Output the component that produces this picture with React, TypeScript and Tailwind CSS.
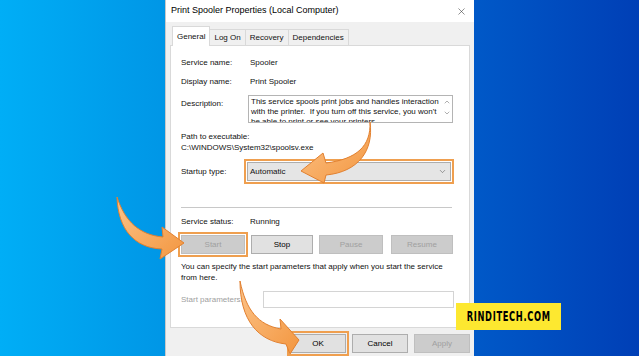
import { X, ChevronDown, ChevronUp } from 'lucide-react';

function Btn({
  label,
  width,
  disabled,
}: {
  label: string;
  width: string;
  disabled?: boolean;
}) {
  return (
    <div
      className={
        width +
        ' h-[19px] flex items-center justify-center border ' +
        (disabled
          ? 'bg-[#cccccc] border-[#bfbfbf] text-[#a0a0a0]'
          : 'bg-[#e1e1e1] border-[#adadad] text-black')
      }
    >
      {label}
    </div>
  );
}

function Highlight({ children }: { children: React.ReactNode }) {
  return <div className="border-2 border-[#ef9f4f] p-px">{children}</div>;
}

function Tab({ label, active }: { label: string; active?: boolean }) {
  if (active) {
    return (
      <div className="h-[20px] -mb-px px-[4px] flex items-center bg-white border border-b-0 border-[#d9d9d9] relative z-10">
        {label}
      </div>
    );
  }
  return (
    <div className="h-[16px] px-[4px] flex items-center bg-[#f0f0f0] border border-b-0 border-l-0 border-[#d9d9d9]">
      {label}
    </div>
  );
}

function Arrows() {
  return (
    <svg
      className="absolute inset-0 pointer-events-none"
      width="639"
      height="356"
      viewBox="0 0 639 356"
    >
      <defs>
        <linearGradient id="orange" x1="0" y1="0" x2="1" y2="1">
          <stop offset="0" stopColor="#fcc48a" />
          <stop offset="1" stopColor="#f3963f" />
        </linearGradient>
      </defs>
      <g fill="url(#orange)" stroke="#e2802f" strokeWidth="1" strokeLinejoin="round">
        <path d="M370,122 C371,146 357,159 326,163 L323,153 L301,171 L324,183 L326,175 C358,172 374,151 370,122 Z" />
        <path d="M117,197 C125,222 140,235 163,237 L162,227 L184,243 L160,259 L162,249 C135,248 118,230 117,197 Z" />
        <path d="M240,281 C246,310 258,325 281,329 L280,319 L299,340 L290,354 L286,344 C258,341 240,320 240,281 Z" />
      </g>
    </svg>
  );
}

export default function App() {
  return (
    <div className="relative w-[639px] h-[356px] overflow-hidden flex bg-[linear-gradient(90deg,#00aef6_0%,#0096e6_26%,#0059c8_74%,#003fb6_100%)] font-['Liberation_Sans',Arial,sans-serif] text-[8px] text-[#111]">
      <div className="ml-[165px] w-[309px] h-full flex flex-col bg-[#f0f0f0] border-l border-[#c8c8c8]">
        {/* title bar */}
        <div className="h-[22px] shrink-0 bg-white flex items-center justify-between pl-[5px] pr-[7px]">
          <span className="text-[9px] text-black">Print Spooler Properties (Local Computer)</span>
          <X size={11} strokeWidth={1.2} className="text-[#333]" />
        </div>

        <div className="px-[4px] flex flex-col">
          {/* tabs */}
          <div className="mt-[4px] flex items-end pl-[2px] text-[8px]">
            <Tab label="General" active />
            <Tab label="Log On" />
            <Tab label="Recovery" />
            <Tab label="Dependencies" />
          </div>

          {/* panel */}
          <div className="h-[283px] bg-white border border-[#d9d9d9] flex flex-col pt-[7px] pl-[10px] pr-[15px]">
            <div className="h-[19px] flex items-center">
              <span className="w-[69px]">Service name:</span>
              <span>Spooler</span>
            </div>
            <div className="h-[19px] flex items-center">
              <span className="w-[69px]">Display name:</span>
              <span>Print Spooler</span>
            </div>
            <div className="mt-[4px] flex">
              <span className="w-[67px] pt-[3px] leading-[12px]">Description:</span>
              <div className="w-[205px] h-[28px] border border-[#b4b4b4] overflow-hidden flex">
                <div className="flex-1 pl-[2px] pt-px leading-[10px]">
                  This service spools print jobs and handles interaction
                  with the printer.&nbsp; If you turn off this service, you won't
                  be able to print or see your printers.
                </div>
                <div className="w-[10px] flex flex-col items-center pt-[2px] text-[#606060]">
                  <ChevronUp size={8} strokeWidth={1.5} />
                  <ChevronDown size={8} strokeWidth={1.5} className="mt-[3px]" />
                </div>
              </div>
            </div>
            <div className="mt-[8px] leading-[11px]">Path to executable:</div>
            <div className="leading-[11px]">C:\WINDOWS\System32\spoolsv.exe</div>
            <div className="mt-[6px] flex items-center">
              <span className="w-[66px]">Startup type:</span>
              <Highlight>
                <div className="w-[204px] h-[19px] bg-[#e5e5e5] border border-[#adadad] flex items-center justify-between pl-[2px] pr-[3px]">
                  <span>Automatic</span>
                  <ChevronDown size={9} strokeWidth={1.3} className="text-[#444]" />
                </div>
              </Highlight>
            </div>
            <div className="mt-[23px] h-px w-[271px] bg-[#c8c8c8]" />
            <div className="mt-[8px] h-[12px] flex items-center">
              <span className="w-[69px]">Service status:</span>
              <span>Running</span>
            </div>
            <div className="mt-[4px] -ml-[3px] flex items-center">
              <Highlight>
                <Btn label="Start" width="w-[64px]" disabled />
              </Highlight>
              <div className="ml-[3px]">
                <Btn label="Stop" width="w-[62px]" />
              </div>
              <div className="ml-[6px]">
                <Btn label="Pause" width="w-[64px]" disabled />
              </div>
              <div className="ml-[8px]">
                <Btn label="Resume" width="w-[62px]" disabled />
              </div>
            </div>
            <div className="mt-[4px] leading-[11px]">
              You can specify the start parameters that apply when you start the service
              <br />
              from here.
            </div>
            <div className="mt-[8px] flex items-center">
              <span className="w-[82px] text-[#a0a0a0]">Start parameters:</span>
              <div className="w-[191px] h-[17px] bg-white border border-[#d4d4d4]" />
            </div>
          </div>

          {/* bottom buttons */}
          <div className="mt-[3px] flex items-center justify-end">
            <Highlight>
              <Btn label="OK" width="w-[56px]" />
            </Highlight>
            <div className="ml-[3px]">
              <Btn label="Cancel" width="w-[56px]" />
            </div>
            <div className="ml-[6px]">
              <Btn label="Apply" width="w-[56px]" disabled />
            </div>
          </div>
        </div>
      </div>

      <Arrows />

      <div className="absolute left-[456px] top-[303px] w-[105px] h-[27px] bg-[#fde830] flex items-center justify-center overflow-hidden">
        <span className="inline-block scale-x-[0.66] whitespace-nowrap font-['DejaVu_Sans_Condensed','DejaVu_Sans',sans-serif] font-bold text-[14px] tracking-[1px] text-black">
          RINDITECH.COM
        </span>
      </div>
    </div>
  );
}
